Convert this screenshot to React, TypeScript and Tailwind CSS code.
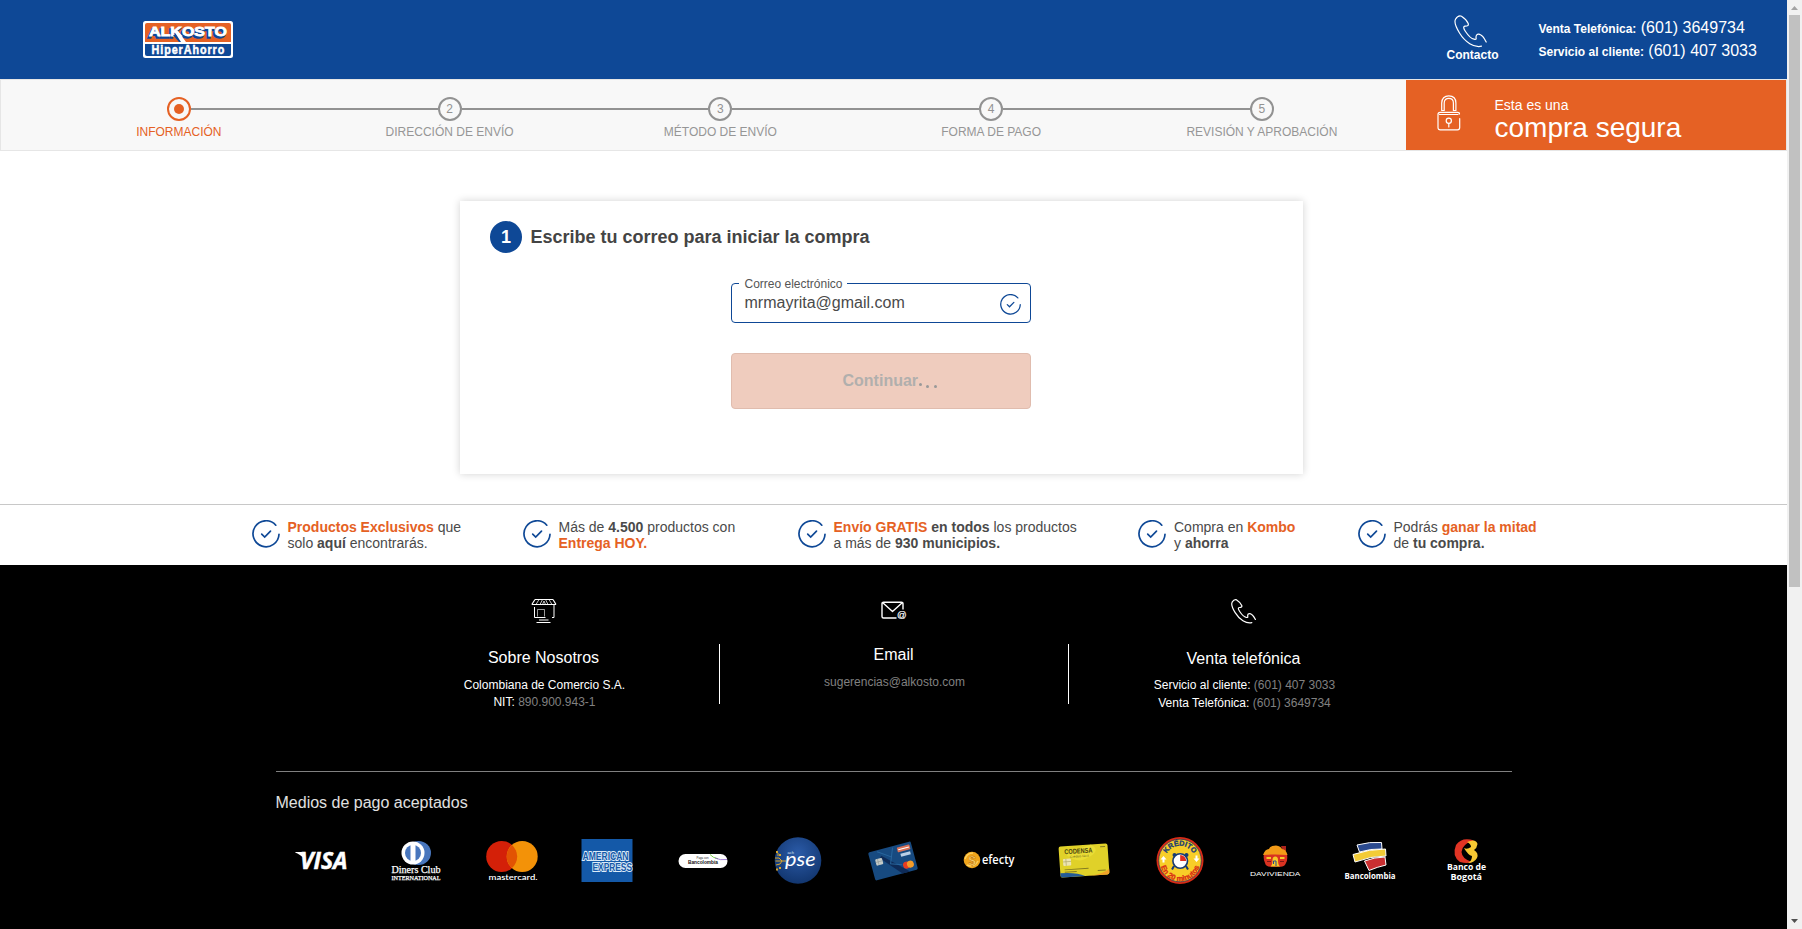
import React from "react";

const FONT = "font-['Liberation_Sans',Arial,sans-serif]";

function AlkostoLogo() {
  return (
    <svg width="90" height="37" viewBox="0 0 90 37" className="block">
      <rect width="90" height="37" rx="2.5" fill="#fff" />
      <path d="M4 2H86Q88 2 88 4V21H2V4Q2 2 4 2Z" fill="#e56124" />
      <path d="M2 23H88V33Q88 35 86 35H4Q2 35 2 33Z" fill="#0e4896" />
      <g fontFamily="'Liberation Sans',sans-serif" fontWeight="bold" fontSize="13.5">
        <text x="4.500" y="17.3" textLength="78" lengthAdjust="spacingAndGlyphs" fill="#0e4896" stroke="#0e4896" strokeWidth="1.4">ALKOSTO</text>
        <text x="6" y="15.3" textLength="78" lengthAdjust="spacingAndGlyphs" fill="#fff" stroke="#fff" strokeWidth=".8">ALKOSTO</text>
      </g>
      <path d="M30 14L36 21H39L33 14Z" fill="#0e4896" />
      <path d="M31 10L35 10L43 21H38Z" fill="#fff" />
      <text transform="translate(8.500 33.200) scale(.8 1)" textLength="91" fontFamily="'Liberation Sans',sans-serif" fontWeight="bold" fontSize="13.500" fill="#fff" stroke="#fff" strokeWidth="0.5">HiperAhorro</text>
    </svg>
  );
}

function PhoneIcon({ size, stroke }: { size: number; stroke: number }) {
  return (
    <svg width={size} height={size} viewBox="0 0 33 33" fill="none" stroke="#fff" strokeWidth={stroke} strokeLinecap="round" strokeLinejoin="round" className="block">
      <path d="M27.5 31.2C20 33 11 27 5.5 18C1 10.500 .2 6.500 1.500 4.200C3.500 1 6 .6 7.500 1.200C10 2.800 13.500 6.800 14.200 8.500C14.800 10.500 13.500 11.300 11 11.200C9 11.500 9.500 13.500 11.500 16.500C13.500 19.500 17.500 23.800 20 24.200C22.500 24.800 22.300 24 22 22.200C22 20 23 19 25 19.200C28 20 30.500 23.500 32.200 27" />
    </svg>
  );
}

function LockIcon() {
  return (
    <svg width="24" height="36" viewBox="0 0 24 36" fill="none" stroke="#fff" strokeWidth="1.200" strokeLinecap="round" className="block">
      <path d="M4.700 15.500V8C4.700 3.500 7.500 .8 11.800 .8S18.900 3.500 18.900 8V15.500M7.200 15.500V8C7.200 5 9.100 3.300 11.800 3.300S16.400 5 16.400 8V15.500M4.700 15.500H7.200M16.400 15.500H18.900" />
      <path d="M21 19.500H2.500M22.700 23.500V32.500Q22.700 34.800 20.500 34.800H3.300Q1 34.800 1 32.500V19.500Q1 17.300 3 17.300H20.500Q22.500 17.300 22.500 19" />
      <circle cx="11.800" cy="25.800" r="2.600" />
      <path d="M11.800 28.500V32" />
    </svg>
  );
}

function CheckIcon({ size, stroke }: { size: number; stroke: number }) {
  return (
    <svg width={size} height={size} viewBox="0 0 28 28" fill="none" stroke="#0e4896" strokeWidth={stroke} strokeLinecap="round" className="block shrink-0">
      <path d="M23.800 5.200A13 13 0 1 0 27 14.300" />
      <path d="M9.700 14.200L12.700 17L18.500 11.200" />
    </svg>
  );
}

const steps = ["INFORMACIÓN", "DIRECCIÓN DE ENVÍO", "MÉTODO DE ENVÍO", "FORMA DE PAGO", "REVISIÓN Y APROBACIÓN"];

function Stepper() {
  return (
    <ol className="ml-[42.500px] flex pt-[17px]">
      {steps.map((label, i) => (
        <li key={label} className="flex w-[270.750px] flex-col items-center">
          <div className="flex w-full items-center">
            <span className={i === 0 ? "h-[2px] flex-1" : "h-[2px] flex-1 bg-[#929292]"} />
            {i === 0 ? (
              <span className="flex size-6 items-center justify-center rounded-full border-2 border-[#e56124]">
                <span className="size-[10px] rounded-full bg-[#e56124]" />
              </span>
            ) : (
              <span className="flex size-6 items-center justify-center rounded-full border-2 border-[#929292] text-[12px] leading-none text-[#929292]">{i + 1}</span>
            )}
            <span className={i === 4 ? "h-[2px] flex-1" : "h-[2px] flex-1 bg-[#929292]"} />
          </div>
          <span className={i === 0 ? "mt-[3px] text-[12px] leading-4 whitespace-nowrap text-[#e56124]" : "mt-[3px] text-[12px] leading-4 whitespace-nowrap text-[#969696]"}>{label}</span>
        </li>
      ))}
    </ol>
  );
}

function Feature({ className, children }: { className: string; children: React.ReactNode }) {
  return (
    <li className={`flex shrink-0 gap-2 ${className}`}>
      <CheckIcon size={28} stroke={1.7} />
      <p className="-mt-[1px] text-[14px] leading-4 whitespace-nowrap text-[#4a4a4a]">{children}</p>
    </li>
  );
}

function Orange({ children }: { children: React.ReactNode }) {
  return <b className="text-[#e56124]">{children}</b>;
}

function StoreIcon() {
  return (
    <svg width="26" height="26" viewBox="0 0 26 26" fill="none" stroke="#fff" strokeWidth="1" className="block">
      <path d="M4 1.500H22M.8 6.500H25M4 1.500L.8 6.500M22 1.500L25 6.500" strokeWidth="1.200" />
      <path d="M8 1.500L5 6.500M11.500 1.500L9 6.500M14.500 1.500L17 6.500M18 1.500L21 6.500M13 3L11.500 6.500M13 3L14.500 6.500" opacity=".75" />
      <path d="M3.500 9V19.500H14.500M23 6.500V19.500H21" />
      <path d="M6.500 18.500V11.500H13.500V18.500" opacity=".6" />
      <path d="M8 22H17.500M5.500 24.500H19.500" strokeWidth="1.100" />
    </svg>
  );
}

function MailIcon() {
  return (
    <svg width="26" height="20" viewBox="0 0 26 20" fill="none" stroke="#fff" strokeWidth="1.400" strokeLinejoin="round" className="block">
      <path d="M22 8.500V2.500Q22 1.200 20.500 1.200H2.500Q1 1.200 1 2.500V15.500Q1 17 2.500 17H15.500M1.500 1.500L11.500 10.500L21.500 1.500" />
      <text x="16" y="17.300" fontFamily="'Liberation Sans',sans-serif" fontSize="9.500" fill="#fff" stroke="#fff" strokeWidth=".2">@</text>
    </svg>
  );
}

const sans = "'Liberation Sans',sans-serif";
const fit = "spacingAndGlyphs";

const payments: { name: string; art: React.ReactNode }[] = [
  {
    name: "Visa",
    art: (
      <g fill="#fff">
        <text x="9" y="38.700" textLength="47.500" lengthAdjust={fit} fontFamily="'Open Sans',sans-serif" fontWeight="bold" fontStyle="italic" fontSize="23" stroke="#fff" strokeWidth=".5">VISA</text>
        <path d="M4 22.500Q4 22 5 22H11.500L13.500 29Q9 24 4 22.500Z" />
      </g>
    ),
  },
  {
    name: "Diners",
    art: (
      <g>
        <ellipse cx="32.500" cy="23" rx="12.500" ry="12" fill="#4876bd" />
        <circle cx="27" cy="23" r="11.500" fill="#fff" />
        <circle cx="27" cy="23" r="8" fill="#4876bd" />
        <path d="M24.500 14V32H29.500V14Z" fill="#fff" />
        <g fill="#fff" fontFamily="'Liberation Serif',serif" stroke="#fff" strokeWidth=".25">
          <text x="5.500" y="42.500" textLength="49" lengthAdjust={fit} fontSize="11">Diners Club</text>
          <text x="5.500" y="49.500" textLength="49" lengthAdjust={fit} fontSize="6.500">INTERNATIONAL</text>
        </g>
      </g>
    ),
  },
  {
    name: "Mastercard",
    art: (
      <g>
        <circle cx="19.700" cy="26.500" r="15.500" fill="#d42008" />
        <circle cx="40.200" cy="26.500" r="15.500" fill="#f39208" />
        <path d="M29.950 14.900A15.500 15.500 0 0 1 29.950 38.100A15.500 15.500 0 0 1 29.950 14.900Z" fill="#e25303" />
        <text x="6.500" y="49.500" textLength="49" lengthAdjust={fit} fontFamily="Lato,sans-serif" fontWeight="600" fontSize="8" fill="#fff">mastercard.</text>
      </g>
    ),
  },
  {
    name: "American Express",
    art: (
      <g>
        <rect x="4.500" y="9" width="51" height="43" fill="#1459a8" />
        <g fontFamily={sans} fontWeight="bold" fontSize="10" fill="#1459a8" stroke="#dcebf8" strokeWidth="1.900" paintOrder="stroke">
          <text x="5.500" y="29.500" textLength="46" lengthAdjust={fit}>AMERICAN</text>
          <text x="15.500" y="40.500" textLength="39.500" lengthAdjust={fit}>EXPRESS</text>
        </g>
      </g>
    ),
  },
  {
    name: "Boton Bancolombia",
    art: (
      <g>
        <rect x="5.500" y="24" width="49" height="14" rx="7" fill="#fff" />
        <text x="23.500" y="29" textLength="12" lengthAdjust={fit} fontFamily={sans} fontSize="3.500" fill="#222">Paga con</text>
        <text x="15" y="34.300" textLength="30" lengthAdjust={fit} fontFamily={sans} fontWeight="bold" fontSize="4.500" fill="#111">Bancolombia</text>
        <path d="M37 24.500Q40 28 45 28.800" stroke="#7bd34a" fill="none" />
        <path d="M42 28Q47 30.500 54 29.500" stroke="#8a62c8" fill="none" strokeWidth=".8" />
      </g>
    ),
  },
  {
    name: "PSE",
    art: (
      <g>
        <defs>
          <radialGradient id="pse" cx=".5" cy=".35" r=".65">
            <stop offset="0" stopColor="#2b5ba8" />
            <stop offset="1" stopColor="#12366f" />
          </radialGradient>
        </defs>
        <circle cx="30" cy="30.500" r="23.300" fill="url(#pse)" />
        <g stroke="#d9a62c" fill="none" strokeWidth="1">
          <path d="M7 28H11L14 31H18M8 35L12 34L14 31M10 23V26M7.500 31H14" />
          <path d="M8 22H10M11 25H13M11 38H13M8 39.500H10" strokeWidth="2" />
        </g>
        <text x="17" y="36" textLength="30.500" lengthAdjust={fit} fontFamily="Lato,sans-serif" fontStyle="italic" fontSize="20" fill="#fff">pse</text>
        <text x="19.500" y="24" fontFamily={sans} fontSize="4" fill="#dbe6f5">ach</text>
      </g>
    ),
  },
  {
    name: "Tarjeta Alkosto",
    art: (
      <g transform="translate(30 31) rotate(-15)">
        <rect x="-22" y="-14.500" width="44" height="29" rx="1.500" fill="#174a80" />
        <path d="M-10 -8L14 14.500H6L-12 -6Z" fill="#0e2b58" />
        <path d="M-13 -13L0 -4M3 -13L-3 2L8 6" stroke="#28669d" fill="none" />
        <rect x="7" y="-12" width="13" height="5" rx=".8" fill="#d87056" />
        <path d="M8 -9.500H19" stroke="#fff" />
        <rect x="9" y="-5" width="10" height="3" fill="#b9cfe6" />
        <rect x="-17" y="-6" width="7" height="6.500" rx="1" fill="#c5cbc8" />
        <path d="M-17 -3H-10M-14.500 -6V0" stroke="#868d8c" strokeWidth=".5" />
        <circle cx="12" cy="7.500" r="3.500" fill="#e73c20" />
        <circle cx="16" cy="7.500" r="3.500" fill="#f49c29" />
      </g>
    ),
  },
  {
    name: "Efecty",
    art: (
      <g>
        <circle cx="13" cy="30" r="8.300" fill="#efa51c" />
        <path d="M6 29Q8 23 14 23M8 35Q15 38 19 31" stroke="#ffd25c" fill="none" strokeWidth="1.500" />
        <text x="9.500" y="35" fontFamily={sans} fontWeight="bold" fontSize="13" fill="#fbd36d" stroke="#b86d08" strokeWidth=".4">$</text>
        <text x="23" y="34" textLength="32.500" lengthAdjust={fit} fontFamily="'Open Sans',sans-serif" fontWeight="600" fontSize="12.500" fill="#fff">efecty</text>
      </g>
    ),
  },
  {
    name: "Codensa",
    art: (
      <g transform="translate(30 30.500) rotate(-4)">
        <rect x="-24.500" y="-15.500" width="49" height="31" rx="2" fill="#e0d129" />
        <path d="M-24.500 11Q-8 11 0 15.500H-22.500Q-24.500 15.500 -24.500 13Z" fill="#245b96" />
        <path d="M4 15.500Q18 15 24.500 10V13.500Q24.500 15.500 22 15.500Z" fill="#f0a229" />
        <path d="M8 -15.500Q20 -8 0 -1Q-8 2 -19 -8" fill="#efe23d" opacity=".6" />
        <text x="-19" y="-7.500" textLength="28" lengthAdjust={fit} fontFamily={sans} fontWeight="bold" fontSize="7" fill="#44400f">CODENSA</text>
        <text x="-14" y="-3.500" textLength="19" lengthAdjust={fit} fontFamily={sans} fontSize="3" fill="#6b651d">Crédito fácil</text>
        <rect x="-21" y="-3" width="8" height="7" rx="1" fill="#ece4b0" />
        <path d="M-21 0H-13M-18 -3V4" stroke="#a79f60" strokeWidth=".6" />
        <path d="M-20 8H4M-20 10.500H-8M13 11H21M17 -12.500H22" stroke="#837b21" strokeWidth="1" />
      </g>
    ),
  },
  {
    name: "Kredito",
    art: (
      <g>
        <defs>
          <path id="kTop" d="M15 28.500A15.200 15.200 0 0 1 45 28.500" />
          <path id="kBottom" d="M10 31A20 20 0 0 0 50 31" />
        </defs>
        <circle cx="30" cy="30.500" r="23.500" fill="#d92b15" />
        <circle cx="30" cy="30.500" r="21.300" fill="#f8ce28" stroke="#1a3764" strokeWidth=".7" />
        <path d="M24 36L22 39.500M36 36L38 39.500" stroke="#173b75" strokeWidth="2" />
        <circle cx="24.500" cy="25" r="2" fill="#173b75" />
        <circle cx="36.500" cy="25" r="2" fill="#173b75" />
        <circle cx="30.200" cy="31" r="7.300" fill="#fff" stroke="#173b75" strokeWidth="1.600" />
        <path d="M30.200 31V25A6 6 0 0 1 36.200 31Z" fill="#df2d1f" />
        <path d="M13.500 26L10.500 29.500H12.500V32.500H14.500V29.500H16.500ZM46.500 32L43.500 28.500H45.500V25.500H47.500V28.500H49.500Z" fill="#fff" />
        <text fontFamily={sans} fontWeight="bold" fontSize="7.200" fill="#173b75" stroke="#173b75" strokeWidth=".3" textAnchor="middle"><textPath href="#kTop" startOffset="50%">KRÉDITO</textPath></text>
        <text fontFamily={sans} fontWeight="bold" fontSize="7.500" fill="#d92b15" stroke="#d92b15" strokeWidth=".3" textAnchor="middle"><textPath href="#kBottom" startOffset="50%">En 20 minutos</textPath></text>
      </g>
    ),
  },
  {
    name: "Davivienda",
    art: (
      <g>
        <path d="M19 24H42Q43 31 40.500 34Q39 37 35 36.700H26Q21 37 20 33Q18 29 19 24Z" fill="#d93221" />
        <path d="M36 16H41V21H38Z" fill="#ad241d" />
        <path d="M18 25Q20 19 24 19Q25 15.500 31 15.500Q36 16 37 19Q41 19 42.500 25Q30 24 18 25Z" fill="#f29a17" />
        <path d="M25.500 36.500Q27.500 35 27.500 30Q27.500 26.500 30.300 26.500T33 30Q33 35 35 36.500Z" fill="#f5ca29" />
        <path d="M28.500 34V31H31V36" stroke="#2b4a8f" fill="none" strokeWidth="1" />
        <path d="M21.500 28H26M35 28H39.500" stroke="#f5ca29" strokeWidth="2" />
        <path d="M22 31.500H26M35 31.500H39" stroke="#7d1814" strokeWidth="1" />
        <text x="5" y="46.300" textLength="50.500" lengthAdjust={fit} fontFamily={sans} fontSize="6.200" fill="#fff">DAVIVIENDA</text>
      </g>
    ),
  },
  {
    name: "Bancolombia",
    art: (
      <g stroke="#fff" strokeWidth="1" strokeLinejoin="round">
        <path d="M17 15Q30 11.500 41.500 12.500L42 19Q31 18.500 19.500 22Z" fill="#2b4a8f" />
        <path d="M13 24.500Q29 19 45.500 19L46 26Q31 26 15 32Z" fill="#f2cb37" />
        <path d="M24.500 31Q35 27 45 27L46 35Q37 37 29 40.500Z" fill="#c92f31" />
        <text x="4.500" y="49" textLength="51" lengthAdjust={fit} fontFamily="'Open Sans',sans-serif" fontWeight="bold" fontSize="9.500" fill="#fff" stroke="none">Bancolombia</text>
      </g>
    ),
  },
  {
    name: "Banco de Bogota",
    art: (
      <g>
        <path d="M38 10.500Q26 6.500 20 15Q15.500 26 24 32Q31 34 36 32Q26 29 25.500 22Q26 14 38 10.500Z" fill="#e13424" />
        <path d="M28 18Q31 20 35 17Q35 14 31 12Q40 8 41.500 14Q41 18 38 20Q43 23 41 28Q38 33 32 33Q36 31 36 26Q32 25 28 18Z" fill="#f7c832" />
        <g fill="#fff" fontFamily="'Open Sans',sans-serif" fontWeight="bold" fontSize="9.500">
          <text x="11" y="39.700" textLength="39" lengthAdjust={fit}>Banco de</text>
          <text x="14.500" y="49.500" textLength="31.500" lengthAdjust={fit}>Bogotá</text>
        </g>
      </g>
    ),
  },
];

function ScrollBar() {
  return (
    <div className="flex h-full w-[15px] shrink-0 flex-col items-start bg-[#f1f1f1]">
      <svg width="15" height="15" viewBox="0 0 15 15"><path d="M4 10L7.500 6L11 10Z" fill="#a3a3a3" /></svg>
      <div className="ml-[2px] h-[572px] w-[11px] bg-[#c1c1c1]" />
      <svg width="15" height="15" viewBox="0 0 15 15" className="mt-auto"><path d="M4 5L7.500 9L11 5Z" fill="#505050" /></svg>
    </div>
  );
}

export default function App() {
  return (
    <div className={`${FONT} flex h-[929px] w-[1802px] overflow-hidden bg-white`}>
      <div className="flex w-[1787px] shrink-0 flex-col">
        <header className="flex h-[79px] shrink-0 bg-[#0e4896] text-white">
          <div className="ml-[143px] pt-[21px]"><AlkostoLogo /></div>
          <div className="ml-[1213px] flex w-[53px] flex-col items-center pt-[15px]">
            <span className="pr-[3.500px]"><PhoneIcon size={33} stroke={1.2} /></span>
            <b className="text-[12px] leading-[14px]">Contacto</b>
          </div>
          <div className="ml-[39.500px] pt-4 text-[16px] leading-[23px] whitespace-nowrap">
            <p><b className="text-[12px] leading-none">Venta Telefónica:</b> (601) 3649734</p>
            <p><b className="text-[12px] leading-none">Servicio al cliente:</b> (601) 407 3033</p>
          </div>
        </header>

        <nav className="flex h-[72px] shrink-0 border border-[#e6e6e6] bg-[#f8f8f8]">
          <Stepper />
          <div className="ml-auto flex w-[380px] bg-[#e56124] text-white">
            <div className="ml-[30.500px] pt-[15px]"><LockIcon /></div>
            <div className="ml-[34px] pt-[17px] whitespace-nowrap">
              <p className="text-[14px] leading-4">Esta es una</p>
              <p className="mt-[1px] text-[28px] leading-7">compra segura</p>
            </div>
          </div>
        </nav>

        <main className="ml-[460px] mt-[50px] h-[273px] w-[843px] shrink-0 bg-white pl-[30px] pt-5 shadow-[0_0_8px_rgba(0,0,0,0.18)]">
          <div className="flex items-center gap-[8.500px]">
            <span className="flex size-8 items-center justify-center rounded-full bg-[#0e4896] text-[18px] font-bold text-white">1</span>
            <h1 className="text-[18px] leading-8 font-bold text-[#444]">Escribe tu correo para iniciar la compra</h1>
          </div>
          <div className="relative ml-[241px] mt-[30px] flex h-10 w-[300px] items-center justify-between rounded border border-[#0e4896] pl-[12.500px] pr-[9px]">
            <label className="absolute -top-[8px] left-[7px] bg-white pr-[4px] pl-[5.500px] text-[12px] leading-4 whitespace-nowrap text-[#555]">Correo electrónico</label>
            <span className="text-[16px] leading-5 text-[#4a4a4a]">mrmayrita@gmail.com</span>
            <span className="pt-[2px]"><CheckIcon size={21} stroke={1.7} /></span>
          </div>
          <button className="ml-[241px] mt-[30px] flex h-14 w-[300px] items-center rounded border border-[#e0bcae] bg-[#efccbe] pl-[110.500px] text-[16px] font-bold text-[#b1afad]">
            Continuar
            <span className="ml-[1px] mt-[6px] size-[3px] rounded-full bg-[#999]" />
            <span className="ml-[4px] mt-[11px] size-[3px] rounded-full bg-[#999]" />
            <span className="ml-[5px] mt-[11px] size-[3px] rounded-full bg-[#999]" />
          </button>
        </main>

        <ul className="mt-[30px] flex h-[61px] shrink-0 border-t border-[#c8c8c8] pt-[15px]">
          <Feature className="ml-[251.500px] w-[271px]"><Orange>Productos Exclusivos</Orange> que<br />solo <b>aquí</b> encontrarás.</Feature>
          <Feature className="w-[275px]">Más de <b>4.500</b> productos con<br /><Orange>Entrega HOY.</Orange></Feature>
          <Feature className="w-[340.500px]"><Orange>Envío GRATIS</Orange> <b>en todos</b> los productos<br />a más de <b>930 municipios.</b></Feature>
          <Feature className="w-[219.500px]">Compra en <Orange>Kombo</Orange><br />y <b>ahorra</b></Feature>
          <Feature className="w-[200px]">Podrás <Orange>ganar la mitad</Orange><br />de <b>tu compra.</b></Feature>
        </ul>

        <footer className="flex-1 overflow-hidden bg-black pt-[33px] text-white">
          <div className="ml-[368.500px] flex h-[173px] text-center text-[12px]">
            <section className="flex w-[350px] flex-col items-center">
              <StoreIcon />
              <h2 className="mt-[24px] text-[16px] leading-5">Sobre Nosotros</h2>
              <p className="mt-[9px] pl-[2px] leading-[17px]">Colombiana de Comercio S.A.<br />NIT: <span className="text-[#808080]">890.900.943-1</span></p>
            </section>
            <span className="mt-[46px] -mr-[1px] h-[60px] w-px bg-white" />
            <section className="flex w-[350px] flex-col items-center">
              <span className="pt-[3px]"><MailIcon /></span>
              <h2 className="mt-[24px] text-[16px] leading-5">Email</h2>
              <p className="mt-[9px] pl-[2px] leading-[17px] text-[#808080]">sugerencias@alkosto.com</p>
            </section>
            <span className="mt-[46px] -ml-[1px] h-[60px] w-px bg-white" />
            <section className="flex w-[350px] flex-col items-center">
              <span className="pt-[1px]"><PhoneIcon size={25} stroke={1.6} /></span>
              <h2 className="mt-[25px] text-[16px] leading-5">Venta telefónica</h2>
              <p className="mt-[7px] pl-[2px] leading-[18px]">Servicio al cliente: <span className="text-[#808080]">(601) 407 3033</span><br />Venta Telefónica: <span className="text-[#808080]">(601) 3649734</span></p>
            </section>
          </div>
          <div className="ml-[275.500px] w-[1236px] border-t border-[#808080] pt-[21px] text-[16px] leading-5 text-[#e0e0e0]">Medios de pago aceptados</div>
          <div className="ml-[273.300px] mt-[17px] flex">
            {payments.map((p) => (
              <div key={p.name} className="flex w-[95.400px] shrink-0 justify-center">
                <svg width="60" height="60" viewBox="0 0 60 60" className="overflow-visible">{p.art}</svg>
              </div>
            ))}
          </div>
        </footer>
      </div>
      <ScrollBar />
    </div>
  );
}
